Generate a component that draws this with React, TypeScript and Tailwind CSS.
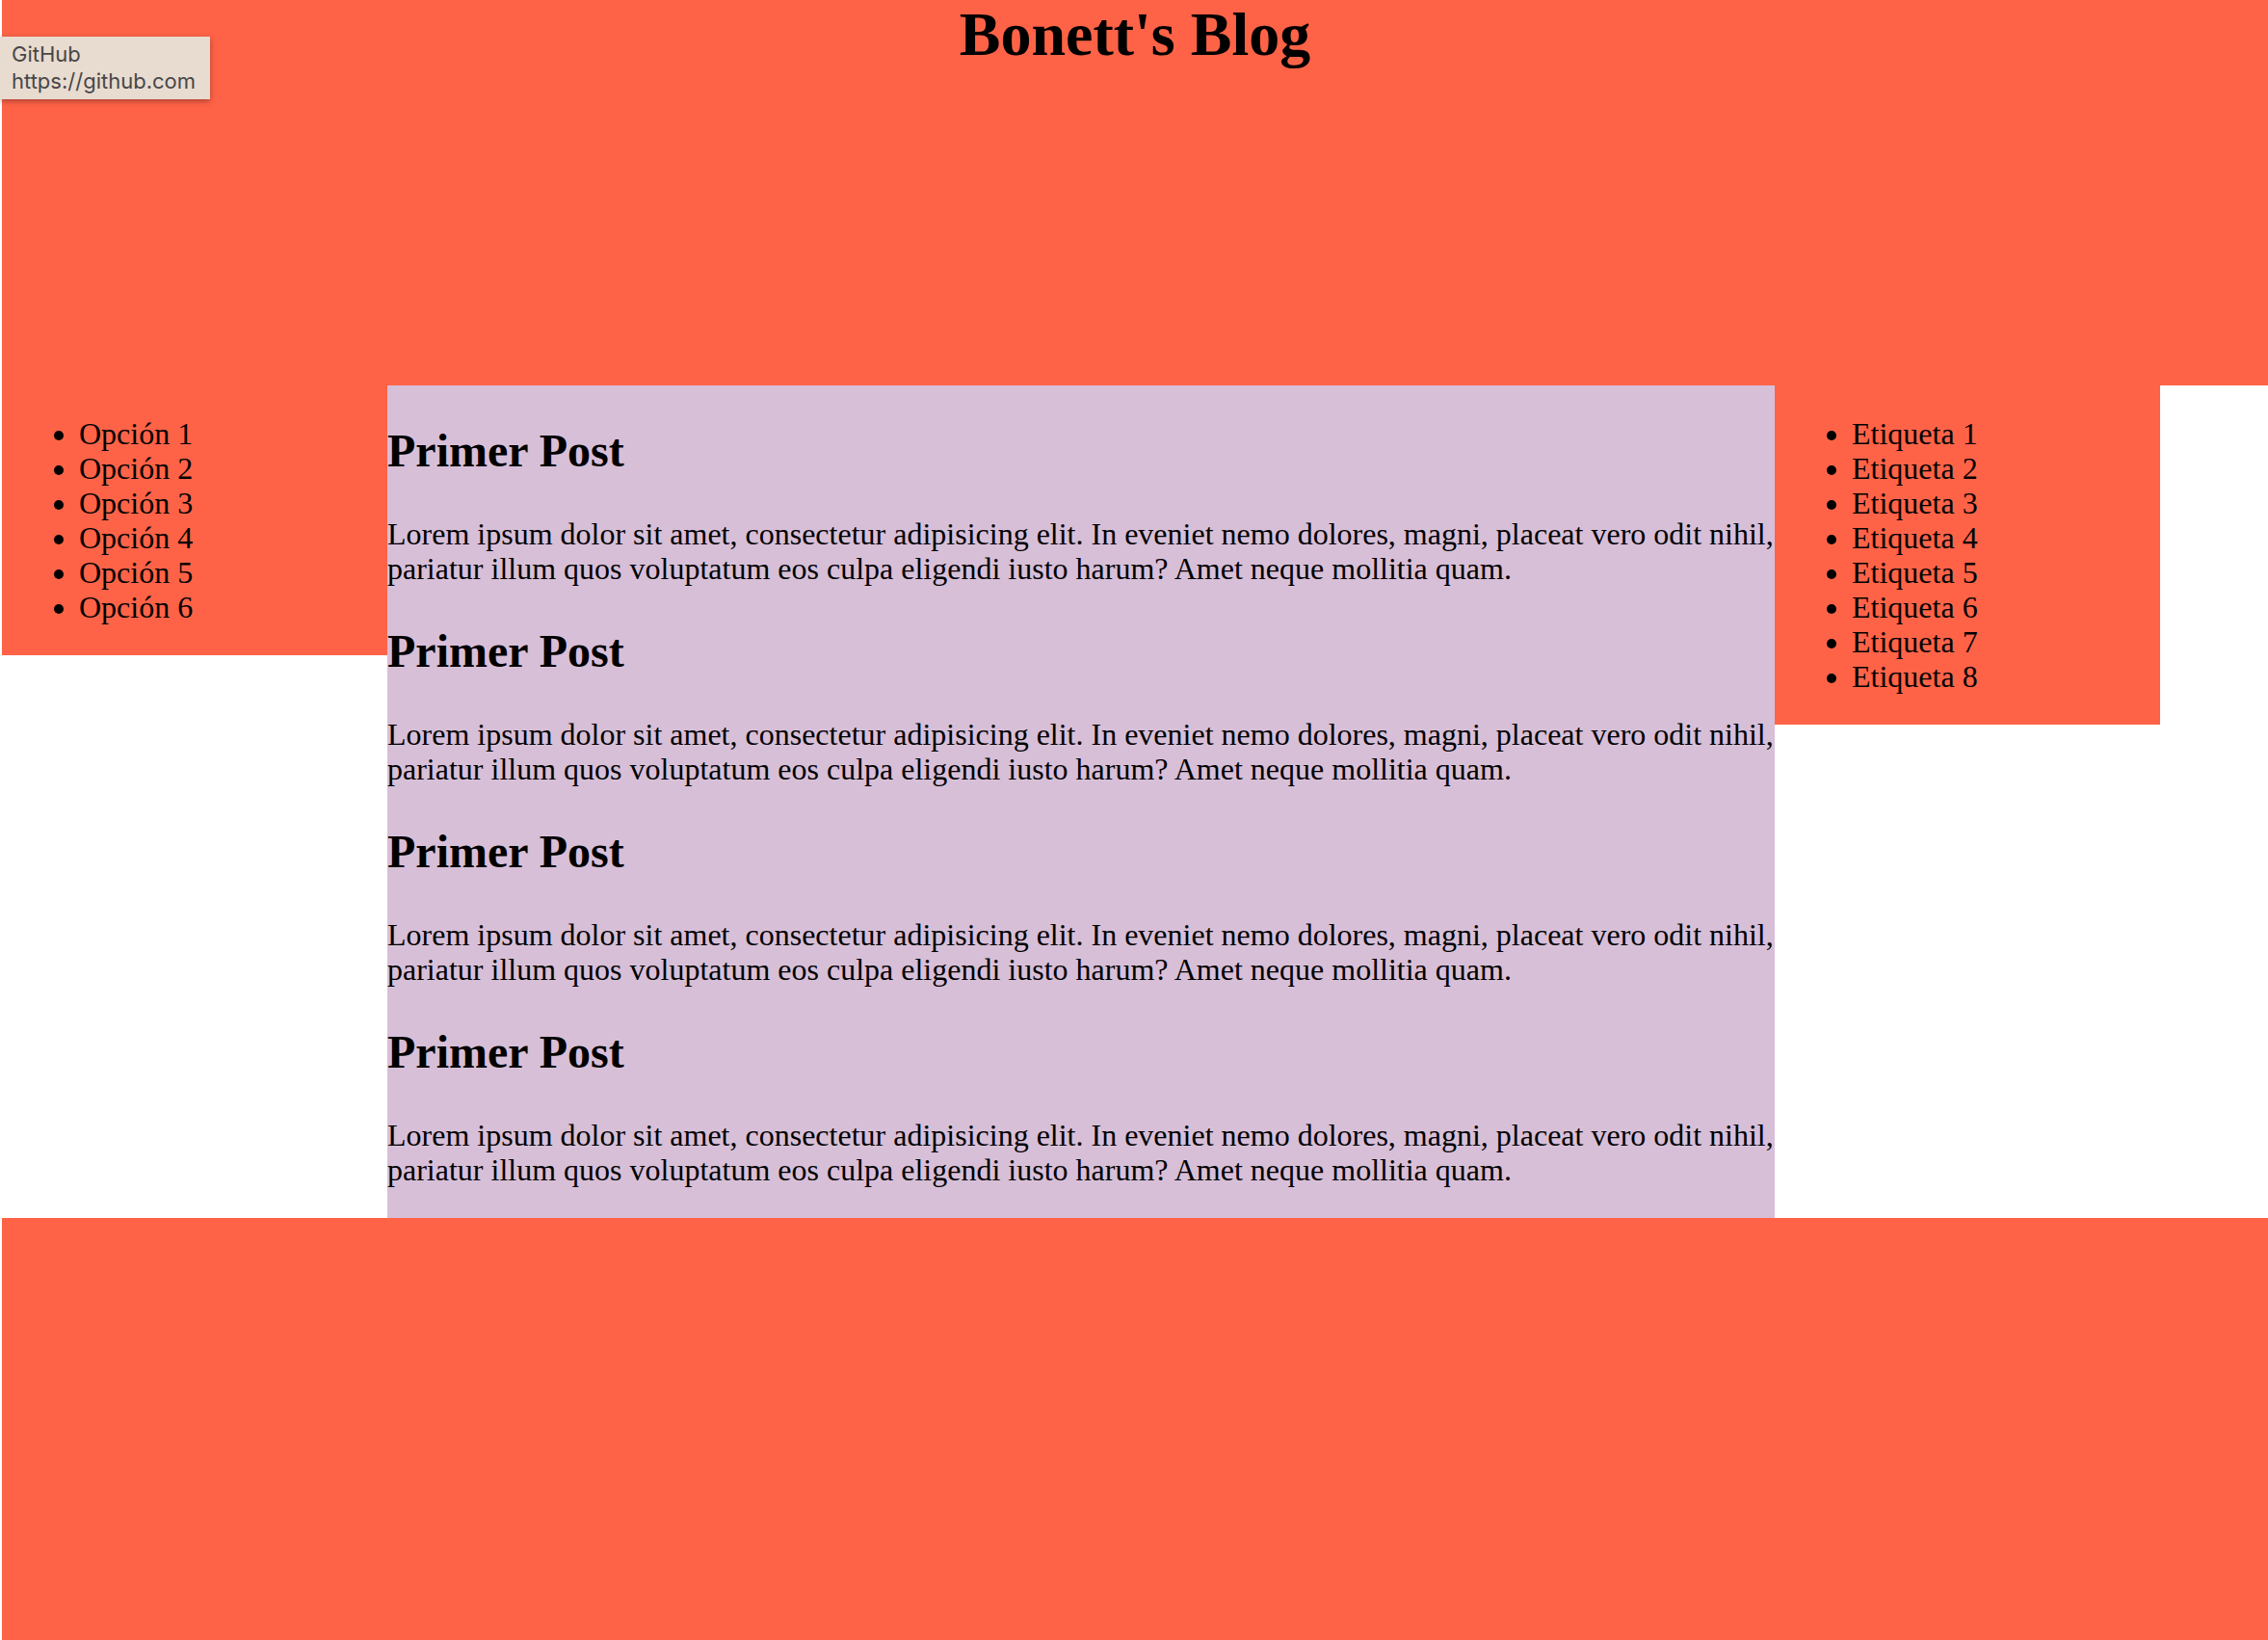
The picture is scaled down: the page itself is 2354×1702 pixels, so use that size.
const opciones = ["Opción 1", "Opción 2", "Opción 3", "Opción 4", "Opción 5", "Opción 6"];
const etiquetas = [
  "Etiqueta 1",
  "Etiqueta 2",
  "Etiqueta 3",
  "Etiqueta 4",
  "Etiqueta 5",
  "Etiqueta 6",
  "Etiqueta 7",
  "Etiqueta 8",
];

const lorem =
  "Lorem ipsum dolor sit amet, consectetur adipisicing elit. In eveniet nemo dolores, magni, placeat vero odit nihil, pariatur illum quos voluptatum eos culpa eligendi iusto harum? Amet neque mollitia quam.";

function Lista({ items }: { items: string[] }) {
  return (
    <ul className="list-disc my-[32px] pl-[80px]">
      {items.map((item) => (
        <li key={item} className="leading-[36px]">
          {item}
        </li>
      ))}
    </ul>
  );
}

function Post() {
  return (
    <article>
      <h2 className="text-[48px] font-bold leading-[56px] my-[40px]">Primer Post</h2>
      <p className="leading-[36px] my-[32px]">{lorem}</p>
    </article>
  );
}

export default function App() {
  return (
    <div className="relative min-h-screen bg-white pl-[2px] text-black text-[32px] font-['Liberation_Serif',_'Times_New_Roman',_serif]">
      {/* tooltip nativo del navegador */}
      <div className="absolute left-0 top-[38px] z-10 w-[218px] h-[65px] bg-[#e8dbd0] pl-[12px] pt-[4px] shadow-[0_2px_6px_rgba(0,0,0,0.35)] font-['Inter',_'Liberation_Sans',_sans-serif] text-[22px] leading-[28px] text-[#474747]">
        <div>GitHub</div>
        <div>https://github.com</div>
      </div>

      <header className="h-[400px] bg-[#ff6347]">
        <h1 className="m-0 text-center text-[64px] font-bold leading-[71px]">Bonett's Blog</h1>
      </header>

      <div className="flex items-start">
        <aside className="w-[400px] bg-[#ff6347] flow-root">
          <Lista items={opciones} />
        </aside>

        <main className="w-[1440px] bg-[#d8bfd8] flow-root">
          <Post />
          <Post />
          <Post />
          <Post />
        </main>

        <aside className="w-[400px] bg-[#ff6347] flow-root">
          <Lista items={etiquetas} />
        </aside>
      </div>

      <footer className="h-[438px] bg-[#ff6347]" />
    </div>
  );
}
